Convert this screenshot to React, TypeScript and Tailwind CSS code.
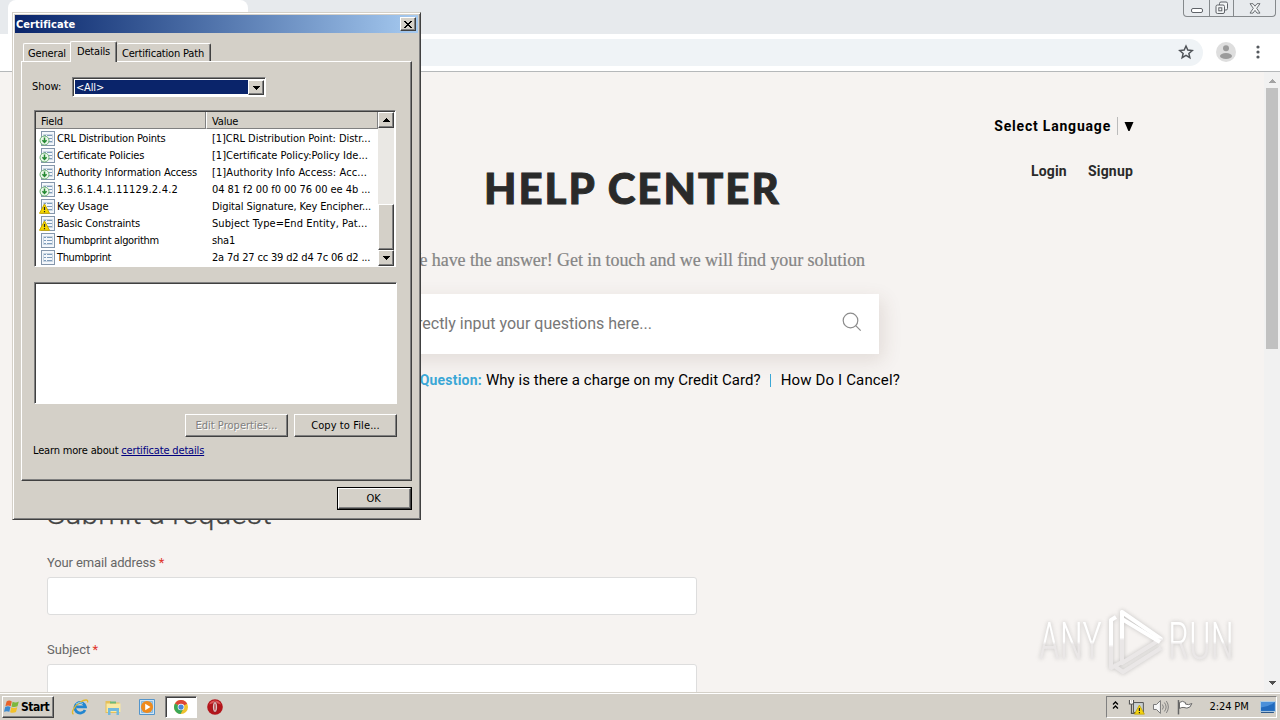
import type { ReactNode } from "react";

type IconKind = "ext" | "warn" | "prop";

const fields: { icon: IconKind; name: string; nameClass: string; value: string; valueClass: string }[] = [
  {
    icon: "ext",
    name: "CRL Distribution Points",
    nameClass: "tracking-[-0.2px]",
    value: "[1]CRL Distribution Point: Distr...",
    valueClass: "tracking-[-0.05px]",
  },
  {
    icon: "ext",
    name: "Certificate Policies",
    nameClass: "tracking-[-0.2px]",
    value: "[1]Certificate Policy:Policy Ide...",
    valueClass: "tracking-[0px]",
  },
  {
    icon: "ext",
    name: "Authority Information Access",
    nameClass: "tracking-[-0.11px]",
    value: "[1]Authority Info Access: Acc...",
    valueClass: "tracking-[0.09px]",
  },
  {
    icon: "ext",
    name: "1.3.6.1.4.1.11129.2.4.2",
    nameClass: "tracking-[0.2px]",
    value: "04 81 f2 00 f0 00 76 00 ee 4b ...",
    valueClass: "tracking-[-0.07px]",
  },
  {
    icon: "warn",
    name: "Key Usage",
    nameClass: "tracking-[-0.05px]",
    value: "Digital Signature, Key Encipher...",
    valueClass: "tracking-[-0.09px]",
  },
  {
    icon: "warn",
    name: "Basic Constraints",
    nameClass: "tracking-[-0.17px]",
    value: "Subject Type=End Entity, Pat...",
    valueClass: "tracking-[0.08px]",
  },
  {
    icon: "prop",
    name: "Thumbprint algorithm",
    nameClass: "tracking-[-0.35px]",
    value: "sha1",
    valueClass: "tracking-[-0.17px]",
  },
  {
    icon: "prop",
    name: "Thumbprint",
    nameClass: "tracking-[-0.37px]",
    value: "2a 7d 27 cc 39 d2 d4 7c 06 d2 ...",
    valueClass: "tracking-[-0.17px]",
  },
];

const raised =
  "bg-[#d4d0c8] border border-t-white border-l-white border-r-[#404040] border-b-[#404040] shadow-[inset_-1px_-1px_0_#808080]";
const sunken =
  "border border-t-[#808080] border-l-[#808080] border-r-white border-b-white shadow-[inset_1px_1px_0_#404040]";

function Arrow({ up, color = "#000" }: { up?: boolean; color?: string }) {
  return (
    <svg width="7" height="4" viewBox="0 0 7 4" shapeRendering="crispEdges">
      <path d={up ? "M3 0h1v1h1v1h1v1h1v1H0V3h1V2h1V1h1z" : "M0 0h7v1H6v1H5v1H4v1H3V3H2V2H1V1H0z"} fill={color} />
    </svg>
  );
}

function FieldIcon({ kind }: { kind: IconKind }) {
  return (
    <svg width="17" height="17" viewBox="0 0 17 17" className="shrink-0">
      <rect x="2.5" y="1.5" width="13" height="14" fill="#f4f7fb" stroke="#8496ab" />
      <path d="M5 5.5h2M8 5.5h5M5 8.5h2M8 8.5h5M5 11.5h2M8 11.5h5" stroke="#7f9cba" />
      <path d="M4.5 4.5h9v8h-9z" fill="none" stroke="#b5c6d6" strokeWidth=".7" />
      {kind === "ext" && (
        <>
          <circle cx="5.5" cy="10.5" r="4.5" fill="#e9f6e9" stroke="#6fb375" />
          <path d="M5.5 7.5v5M3.4 10.2l2.1 2.2 2.1-2.2" fill="none" stroke="#248a32" strokeWidth="1.5" />
        </>
      )}
      {kind === "warn" && (
        <>
          <path d="M5.5 6l5 9.3H.5z" fill="#f5d800" stroke="#c9a800" strokeLinejoin="round" />
          <path d="M5.5 9v3M5.5 13v1.200" stroke="#222" strokeWidth="1.2" />
        </>
      )}
    </svg>
  );
}

function DialogButton({ children, className = "" }: { children: ReactNode; className?: string }) {
  return <button className={`flex items-center justify-center ${raised} ${className}`}>{children}</button>;
}

function CertificateDialog() {
  return (
    <div className="absolute left-[12px] top-[12px] flex h-[508px] w-[409px] flex-col border border-t-[#d4d0c8] border-l-[#d4d0c8] border-r-[#404040] border-b-[#404040] bg-[#d4d0c8] p-[2px] font-['DejaVu_Sans_Condensed','DejaVu_Sans',sans-serif] text-[11px] leading-[13px] tracking-[-0.17px] text-black shadow-[inset_1px_1px_0_#fff,inset_-1px_-1px_0_#808080] [font-stretch:condensed]">
      {/* Title bar */}
      <div className="flex h-[18px] shrink-0 items-center justify-between bg-gradient-to-r from-[#0a246a] to-[#a6caf0] pl-[1px] pr-[2px]">
        <span className="text-[11px] font-bold tracking-[0.05px] text-white">Certificate</span>
        <button className={`flex h-[14px] w-[16px] items-center justify-center ${raised}`}>
          <svg width="8" height="7" viewBox="0 0 8 7" shapeRendering="crispEdges">
            <path d="M0 0h2v1h1v1h2V1h1V0h2v1H7v1H6v1H5v1h1v1h1v1h1v1H6V6H5V5H3v1H2v1H0V6h1V5h1V4h1V3H2V2H1V1H0z" />
          </svg>
        </button>
      </div>

      {/* Tabs */}
      <div className="mt-[8px] flex h-[20px] shrink-0 items-end pl-[8px]">
        <div className="flex h-[18px] w-[47px] items-center justify-center rounded-tl-[2px] border-l border-t border-white pt-px">General</div>
        <div className="z-10 -mb-[1px] flex h-[21px] w-[47px] items-start justify-center rounded-t-[2px] border-l border-t border-r border-white border-r-[#404040] bg-[#d4d0c8] pt-[3px] shadow-[inset_-1px_0_0_#808080]">
          Details
        </div>
        <div className="flex h-[18px] w-[94px] items-center justify-center rounded-t-[2px] border-t border-r border-t-white border-r-[#404040] pr-px pt-px shadow-[inset_-1px_0_0_#808080]">
          Certification Path
        </div>
      </div>

      {/* Details panel */}
      <div className="ml-[6px] flex h-[420px] w-[391px] shrink-0 flex-col border border-t-white border-l-white border-r-[#404040] border-b-[#404040] pl-[12px] shadow-[inset_-1px_-1px_0_#808080]">
        <div className="-ml-[2px] mt-[15px] flex h-[20px] items-center">
          <span className="w-[40px] pb-[2px] tracking-[0px]">Show:</span>
          <div className={`flex h-[20px] w-[194px] bg-white pb-px pl-[2px] pr-px pt-[2px] ${sunken}`}>
            <div className="mb-px flex flex-1 items-center bg-[#0a246a] pl-[1px] text-white">&lt;All&gt;</div>
            <div className={`flex w-[16px] items-center justify-center ${raised}`}>
              <Arrow />
            </div>
          </div>
        </div>

        <div className={`mt-[13px] flex h-[157px] w-[362px] bg-white pl-px pr-px pt-px ${sunken}`}>
          <div className="flex flex-1 flex-col overflow-hidden">
            <div className="flex h-[17px] shrink-0">
              <div className="flex w-[170px] shrink-0 items-center border-b border-r border-[#808080] bg-[#d4d0c8] pl-[5px] pt-[2px]">Field</div>
              <div className="flex flex-1 items-center border-b border-l border-r border-[#808080] border-l-white bg-[#d4d0c8] pl-[5px] pt-[2px]">Value</div>
            </div>
            <div className="pt-[1px]">
              {fields.map((f) => (
                <div key={f.name} className="flex h-[17px] items-center whitespace-nowrap">
                  <div className="flex w-[176px] shrink-0 items-center pl-[3px]">
                    <FieldIcon kind={f.icon} />
                    <span className={`pl-[1px] ${f.nameClass}`}>{f.name}</span>
                  </div>
                  <span className={f.valueClass}>{f.value}</span>
                </div>
              ))}
            </div>
          </div>
          <div className="flex w-[16px] flex-col bg-[#eae8e4]">
            <div className={`flex h-[16px] items-center justify-center ${raised}`}>
              <Arrow up />
            </div>
            <div className="flex-1" />
            <div className={`h-[46px] ${raised}`} />
            <div className={`flex h-[16px] items-center justify-center ${raised}`}>
              <Arrow />
            </div>
          </div>
        </div>

        <div className={`mt-[15px] h-[122px] w-[363px] bg-white ${sunken}`} />

        <div className="mt-[10px] flex w-[363px] justify-end gap-[6px]">
          <DialogButton className="h-[23px] w-[103px] tracking-[0.02px] text-[#808080] [text-shadow:1px_1px_0_#fff]">
            Edit Properties...
          </DialogButton>
          <DialogButton className="h-[23px] w-[103px] tracking-[0.1px]">Copy to File...</DialogButton>
        </div>
        <p className="-ml-px mt-[7px]">
          Learn more about <a className="text-[#000080] underline">certificate details</a>
        </p>
      </div>

      <div className="mt-[6px] flex justify-end pr-[6px]">
        <div className="border border-black">
          <DialogButton className="h-[21px] w-[73px] pr-[2px]">OK</DialogButton>
        </div>
      </div>
    </div>
  );
}

function BrowserChrome() {
  return (
    <header className="flex h-[72px] shrink-0 flex-col border-b border-[#b5b8ba] bg-white">
      <div className="flex h-[34px] shrink-0 items-start justify-between bg-[#e7eaed]">
        <div className="ml-[8px] h-[34px] w-[240px] rounded-t-[8px] bg-white" />
        <div className="mr-[4px] flex h-[17px] w-[93px] rounded-b-[4px] border border-t-0 border-[#85898c] bg-[#e7eaed]">
          <div className="flex w-[25px] items-end justify-center pb-[3px]">
            <div className="h-[5px] w-[12px] rounded-[2px] border border-[#5f6368] bg-white" />
          </div>
          <div className="flex w-[25px] items-center justify-center border-l border-r border-[#85898c]">
            <svg width="14" height="14" viewBox="0 0 14 14" fill="#f3f5f6" stroke="#5f6368">
              <rect x="4.5" y="1" width="8" height="8" rx="1.5" />
              <rect x="1" y="4" width="8.5" height="8.5" rx="1.5" />
              <rect x="3.8" y="6.8" width="3" height="3" />
            </svg>
          </div>
          <div className="flex flex-1 items-center justify-center">
            <svg width="12" height="11" viewBox="0 0 12 11">
              <path d="M1 .7h3L6 3.2 8 .7h3L7.7 5.3 11 10.1H8L6 7.4l-2 2.7H1l3.3-4.8z" fill="#f3f5f6" stroke="#5f6368" strokeWidth=".9" />
            </svg>
          </div>
        </div>
      </div>
      <div className="flex flex-1 items-center">
        <div className="-mt-px ml-[120px] flex h-[27px] w-[1083px] items-center justify-end rounded-full bg-[#eff3f6] pr-[9px]">
          <svg width="16" height="16" viewBox="0 0 24 24" fill="none" stroke="#4f5358" strokeWidth="2.2">
            <path d="M12 3l2.7 6.1 6.7.6-5.1 4.4 1.5 6.5L12 17.2l-5.8 3.4 1.5-6.5-5.1-4.4 6.7-.6z" />
          </svg>
        </div>
        <svg width="20" height="20" viewBox="0 0 20 20" className="-mt-[2px] ml-[13px]">
          <circle cx="10" cy="10" r="10" fill="#dedede" />
          <circle cx="10" cy="6.3" r="3" fill="#9b9b9b" />
          <ellipse cx="10" cy="14" rx="6" ry="3" fill="#9b9b9b" />
        </svg>
        <svg width="4" height="16" viewBox="0 0 4 16" className="-mt-px ml-[20px]" fill="#55595e">
          <circle cx="2" cy="3" r="1.6" />
          <circle cx="2" cy="8" r="1.6" />
          <circle cx="2" cy="13" r="1.6" />
        </svg>
      </div>
    </header>
  );
}

function HelpCenter() {
  return (
    <main className="flex flex-1 flex-col overflow-hidden bg-[#f6f3f1] font-[Roboto,sans-serif]">
      <div className="flex h-[178px] shrink-0 justify-between">
        <h1 className="ml-[484px] mt-[91px] whitespace-nowrap font-[Lato,sans-serif] text-[42px] font-black leading-[50px] tracking-[2px] text-[#2a2a2a] [-webkit-text-stroke:0.9px_#2a2a2a]">
          HELP CENTER
        </h1>
        <div className="mr-[130px] mt-[44px] flex flex-col items-end text-[14px] font-bold leading-[20px]">
          <div className="flex items-center tracking-[0.8px] text-black">
            Select Language
            <span className="ml-[6px] h-[18px] w-px bg-[#bbb]" />
            <svg width="10" height="9" viewBox="0 0 10 9" className="ml-[6px]">
              <path d="M.5 0h9L5.6 9H4.400z" />
            </svg>
          </div>
          <div className="mr-px mt-[25px] flex gap-[21px] tracking-[0.2px] text-[#2a2a2a]">
            <span>Login</span>
            <span>Signup</span>
          </div>
        </div>
      </div>

      <p className="mr-[399px] shrink-0 text-right font-['Liberation_Serif',serif] text-[18px] leading-[20px] tracking-[-0.07px] text-[#858585] [-webkit-text-stroke:0.2px_#858585]">
        We have the answer! Get in touch and we will find your solution
      </p>

      <div className="ml-[385px] mt-[24px] flex h-[60px] w-[494px] shrink-0 items-center justify-between bg-white pr-[17px] shadow-[4px_6px_18px_rgba(90,60,50,0.13)]">
        <span className="w-[267px] whitespace-nowrap text-right text-[16px] text-[#777]">Directly input your questions here...</span>
        <svg width="20" height="20" viewBox="0 0 20 20" fill="none" stroke="#8c8c8c" strokeWidth="1.2" className="mb-[4px]">
          <circle cx="8.5" cy="8.5" r="7.3" />
          <path d="M13.7 13.7l5 5" />
        </svg>
      </div>

      <div className="mr-[364px] mt-[16px] flex shrink-0 items-center justify-end text-[15px] leading-[20px] tracking-[0.05px] text-black">
        <b className="mr-[4px] text-[14px] tracking-[0.2px] text-[#3ba7d6]">Popular Question:</b>
        Why is there a charge on my Credit Card?
        <span className="ml-[9px] mr-[10px] h-[13px] w-px bg-[#3ba7d6]" />
        <span className="tracking-[0.15px]">How Do I Cancel?</span>
      </div>

      <form className="ml-[47px] mt-[104px] flex w-[650px] shrink-0 flex-col text-[13px] text-[#666]">
        <h2 className="text-[30px] font-light leading-[40px] tracking-[0.08px] text-[#444] [-webkit-text-stroke:0.3px_#444]">Submit a request</h2>
        <label className="mt-[19px] leading-[20px] tracking-[-0.12px]">
          Your email address <span className="text-[#e0352b]">*</span>
        </label>
        <div className="mt-[4px] h-[38px] rounded-[3px] border border-[#ddd] bg-white" />
        <label className="mt-[25px] leading-[20px]">
          Subject <span className="-ml-px text-[#e0352b]">*</span>
        </label>
        <div className="mt-[4px] h-[38px] rounded-[3px] border border-[#ddd] bg-white" />
      </form>
    </main>
  );
}

function Watermark() {
  return (
    <div className="absolute left-[1038px] top-[608px] flex font-['Roboto_Condensed',Roboto,sans-serif] [filter:drop-shadow(0_0_2px_rgba(120,120,120,0.4))] [font-stretch:condensed]">
      <svg width="200" height="66" viewBox="0 0 200 66" className="overflow-visible">
        <defs>
          <linearGradient id="wm" x1="0" y1="0" x2="0" y2="1">
            <stop offset=".5" stopColor="#fff" />
            <stop offset=".55" stopColor="#eae7e7" />
          </linearGradient>
        </defs>
        <text x="1" y="51" textLength="63" lengthAdjust="spacingAndGlyphs" fill="url(#wm)" fontSize="51" fontWeight="300">ANY</text>
        <text x="130" y="51" textLength="66" lengthAdjust="spacingAndGlyphs" fill="url(#wm)" fontSize="51" fontWeight="300">RUN</text>
        <g fill="none" stroke="url(#wm)" strokeWidth="4" strokeLinejoin="round">
          <path d="M84 4v51l39-24z" />
          <path d="M84 11l38 23M78 9l-5 3v48l11-6M75 57l10 7 38-24" />
        </g>
      </svg>
    </div>
  );
}

function Taskbar() {
  return (
    <footer className="flex h-[28px] shrink-0 items-center border-t border-[#d4d0c8] bg-[#d4d0c8] pb-[2px] pl-[2px] pr-[3px] pt-[3px] font-['DejaVu_Sans_Condensed','DejaVu_Sans',sans-serif] shadow-[inset_0_1px_0_#fff] [font-stretch:condensed]">
      <button className={`flex h-[22px] w-[52px] items-center pl-px text-[12px] font-bold tracking-[-0.5px] ${raised}`}>
        <svg width="16" height="16" viewBox="0 0 16 16" className="mr-px shrink-0">
          <path d="M2.6 2.5Q5 .8 7.8 2.4L6.7 7.2Q4 5.800 1.400 7.200z" fill="#e8622a" />
          <path d="M8.600 2.700Q11.500 4.200 14.800 2.500L13.500 7.300Q10.500 8.600 7.500 7.500z" fill="#7cb83e" />
          <path d="M1.200 8Q4 6.700 6.500 8L5.300 12.800Q2.800 11.500 0 12.800z" fill="#3c8ad0" />
          <path d="M7.300 8.300Q10.200 9.600 13.300 8.200L12 13Q9 14.500 6.100 13.200z" fill="#f3c12b" />
        </svg>
        Start
      </button>
      {/* Internet Explorer */}
      <svg width="18" height="18" viewBox="0 0 18 18" className="ml-[17px]" fill="none">
        <path d="M14 12a5.300 5.300 0 1 1 .4-3.200H5.500" stroke="#2286d0" strokeWidth="2.800" />
        <path d="M2.500 16.300C-.5 14.500 3.800 7.500 9 4.300s8.500-3 7.500.2" stroke="#e2b82c" strokeWidth="1.300" />
        <path d="M5 6q3-3 7-.5" stroke="#8bd0f4" />
      </svg>
      {/* Explorer */}
      <svg width="18" height="18" viewBox="0 0 18 18" className="ml-[15px]">
        <path d="M1.500 3h5l1 1.500h8V15h-14z" fill="#e5c05a" />
        <path d="M2.500 5.500h14V14h-14z" fill="#f9e9a3" />
        <path d="M6 3.500h6v2H6z" fill="#6dba78" />
        <path d="M4 17v-7h11v7h-2.500v-4h-6v4z" fill="#71b9dd" />
      </svg>
      {/* Media Player */}
      <svg width="18" height="18" viewBox="0 0 18 18" className="ml-[16px]">
        <path d="M1.500 1.500h15v15h-15z" fill="#cfe4f5" stroke="#5495cb" />
        <path d="M3.500 3.500h11v11h-11z" fill="#a9cdea" stroke="#85b8df" />
        <circle cx="9" cy="9" r="6" fill="#ef8a1c" />
        <path d="M7.200 5.800v6.400L12.500 9z" fill="#fff" />
      </svg>
      {/* Chrome, the active window */}
      <div className={`ml-[9px] flex h-[22px] w-[32px] items-center justify-center bg-white ${sunken}`}>
        <svg width="14" height="14" viewBox="0 0 16 16">
          <circle cx="8" cy="8" r="8" fill="#efc22e" />
          <path d="M8 8L1.100 4A8 8 0 0 1 15 4.200z" fill="#dc4637" />
          <path d="M8 8L1.100 4A8 8 0 0 0 7.500 16L11 9.500z" fill="#3aa757" />
          <circle cx="8" cy="8" r="3.800" fill="#fff" />
          <circle cx="8" cy="8" r="3" fill="#4a86d8" />
        </svg>
      </div>
      {/* Opera */}
      <svg width="16" height="16" viewBox="0 0 16 16" className="ml-[10px]">
        <circle cx="8" cy="8" r="7.800" fill="#b3151b" />
        <path d="M2 5.500a6.500 6.500 0 0 1 12 0q-6-3-12 0z" fill="#de5558" />
        <ellipse cx="8" cy="8" rx="2.200" ry="5.200" fill="#fff" stroke="#7c0b10" strokeWidth=".7" />
        <ellipse cx="8" cy="8" rx=".8" ry="4" fill="#b03a3e" />
      </svg>

      <div className="ml-auto flex h-[22px] w-[171px] items-center border border-t-[#808080] border-l-[#808080] border-r-white border-b-white text-[11px] tracking-[-0.1px]">
        <svg width="7" height="9" viewBox="0 0 7 9" fill="none" stroke="#000" strokeWidth="1.300" className="mb-[3px] ml-[5px]">
          <path d="M1 3.500L3.500 1 6 3.500M1 7.500L3.500 5 6 7.500" />
        </svg>
        <svg width="17" height="16" viewBox="0 0 17 16" className="ml-[9px]">
          <path d="M5.500 3.500h10v10h-10z" fill="#c9d0d2" stroke="#555" />
          <path d="M1.500 1v4h4V1M3.500 5v9.500h4" fill="none" stroke="#555" strokeWidth="1.200" />
          <path d="M2.500 1v3h2V1" stroke="#fff" fill="none" />
          <path d="M11.500 6l5 9.200h-10z" fill="#f4d30e" stroke="#b99b00" strokeWidth=".7" />
          <path d="M11.500 9v3M11.500 13v1.200" stroke="#222" strokeWidth="1.200" />
        </svg>
        <svg width="18" height="16" viewBox="0 0 18 16" fill="none" stroke="#777" className="ml-[7px]">
          <path d="M1.500 5.500h3l4-4v13l-4-4h-3z" fill="#f7f7f7" />
          <path d="M10.500 5.500q2 2.500 0 5M12.500 3.500q3.500 4.500 0 9M14.500 2q4 6 0 12" strokeWidth=".9" />
        </svg>
        <svg width="17" height="16" viewBox="0 0 17 16" stroke="#666" className="ml-[7px]">
          <path d="M2.500 3.500q3-2.500 6 0v1.500q3 1.500 6.500-.5l-2 3.500q-3 2-6 .5-2-.5-4.500 1z" fill="#fff" />
          <path d="M1.500 1v14.500" strokeWidth="1.500" />
        </svg>
        <span className="ml-[16px] w-[44px] whitespace-nowrap">2:24 PM</span>
        <svg width="16" height="14" viewBox="0 0 16 14" className="ml-[7px]">
          <path d="M.5 1.500h15v10H.5z" fill="#226bbe" stroke="#b3cfe5" />
          <path d="M1 2h14Q9 7 1 7.500z" fill="#4a90da" />
          <path d="M1 12.500h13" stroke="#204f86" />
        </svg>
      </div>
    </footer>
  );
}

export default function App() {
  return (
    <div className="relative flex h-[720px] w-[1280px] flex-col overflow-hidden bg-[#d4d0c8]">
      <BrowserChrome />
      <div className="flex h-[620px] shrink-0">
        <HelpCenter />
        {/* Page scrollbar */}
        <div className="flex w-[16px] flex-col items-center bg-[#f1f1f1]">
          <div className="flex h-[16px] items-center pt-[2px]">
            <Arrow up color="#a3a3a3" />
          </div>
          <div className="h-[261px] w-[12px] bg-[#c1c1c1]" />
          <div className="mt-auto flex h-[18px] items-center">
            <Arrow color="#505050" />
          </div>
        </div>
      </div>
      <Taskbar />
      <Watermark />
      <CertificateDialog />
    </div>
  );
}
